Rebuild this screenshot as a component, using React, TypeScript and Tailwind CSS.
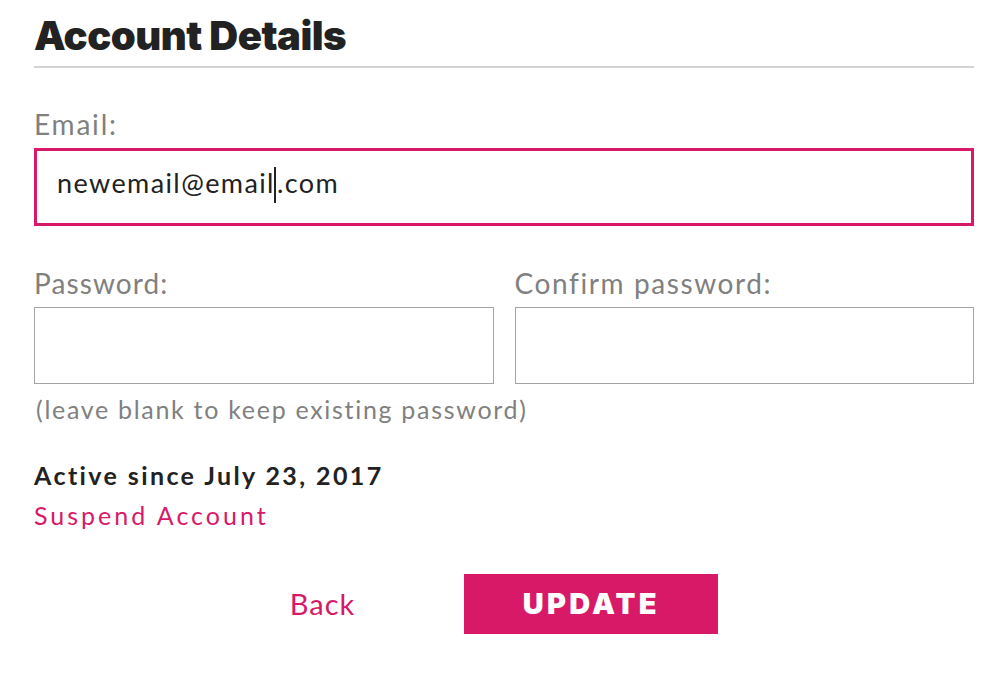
import React from "react";

export default function App() {
  return (
    <div className="w-[1008px] h-[684px] bg-white px-[34px] font-['Lato',sans-serif] text-[#222222] overflow-hidden">
      <h1 className="pt-[13px] h-[66px] text-[40px] leading-[46px] font-black font-['Inter',sans-serif] tracking-[-0.5px] text-[#222222]">
        Account Details
      </h1>
      <div className="h-[2px] bg-[#d3d3d3]" />
      <div className="mt-[36px] mb-[4px] h-[40px] text-[28px] leading-[40px] tracking-[1.8px] text-[#808080]">Email:</div>
      <div className="h-[78px] border-[3px] border-[#d71968] pt-[17px] pl-[20px]">
        <div className="flex items-start h-[30px] text-[27px] leading-[30px] tracking-[1.4px] text-[#222222]">
          <span>newemail@email</span>
          <span className="mt-[-1px] ml-[-1px] mr-[1px] w-[2px] h-[36px] bg-[#222222]" />
          <span>.com</span>
        </div>
      </div>
      <div className="mt-[37px] grid grid-cols-2 gap-x-[21px]">
        <div>
          <div className="mb-[4px] h-[40px] text-[28px] leading-[40px] tracking-[1.1px] text-[#808080]">Password:</div>
          <div className="h-[77px] border border-[#a3a3a3]" />
        </div>
        <div>
          <div className="mb-[4px] h-[40px] text-[28px] leading-[40px] tracking-[1.6px] text-[#808080]">Confirm password:</div>
          <div className="h-[77px] border border-[#a3a3a3]" />
        </div>
      </div>
      <div className="mt-[10px] pl-[2px] h-[30px] text-[25px] leading-[30px] tracking-[1.7px] text-[#808080]">
        (leave blank to keep existing password)
      </div>
      <div className="mt-[36px] h-[30px] text-[25px] leading-[30px] font-bold tracking-[2.4px] text-[#222222]">
        Active since July 23, 2017
      </div>
      <div className="mt-[10px] h-[30px] text-[25px] leading-[30px] tracking-[3px] text-[#d71968]">Suspend Account</div>
      <div className="mt-[44px] flex justify-center items-center gap-[109px]">
        <span className="text-[29px] tracking-[1px] text-[#d71968]">Back</span>
        <button className="w-[254px] h-[60px] bg-[#d71968] text-white text-[29px] font-black font-['Inter',sans-serif] tracking-[3.2px]">
          UPDATE
        </button>
      </div>
    </div>
  );
}
